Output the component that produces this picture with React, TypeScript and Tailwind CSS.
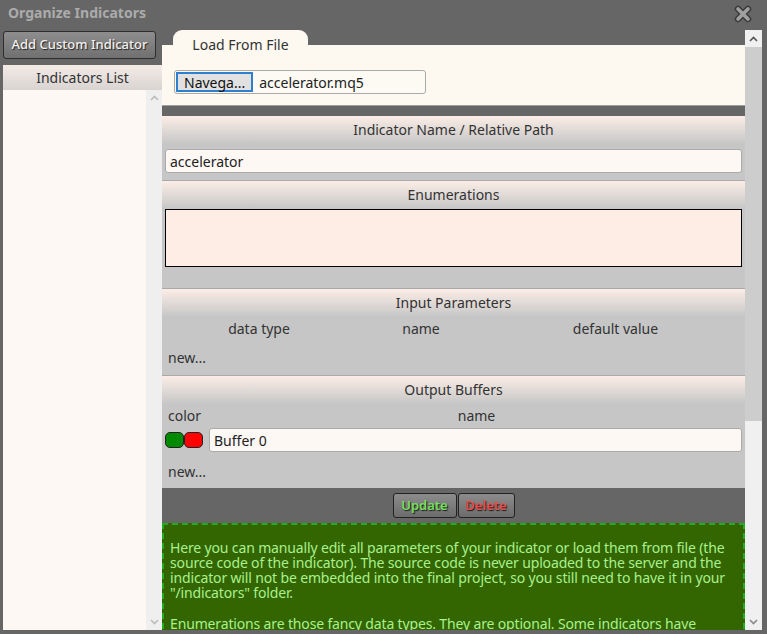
import React from "react";

const hdr =
  "h-[28px] flex items-center justify-center pb-[2px] text-[14px] text-[#333] bg-[linear-gradient(to_bottom,#fcede6_0%,#e3dcd8_45%,#c6c6c6_100%)]";

function Chevron({ up, color = "#555" }: { up?: boolean; color?: string }) {
  return (
    <svg width="9" height="6" viewBox="0 0 9 6">
      <path
        d={up ? "M1 5 L4.5 1.5 L8 5" : "M1 1 L4.5 4.5 L8 1"}
        fill="none"
        stroke={color}
        strokeWidth="1.6"
      />
    </svg>
  );
}

export default function App() {
  return (
    <div className="w-[767px] h-[634px] bg-[#666666] flex flex-col overflow-hidden font-['Noto_Sans',sans-serif]">
      {/* title bar */}
      <div className="h-[30px] flex justify-between items-start pl-[8px] pr-[15px] pt-[3px]">
        <span className="text-[14px] font-bold text-[#ababab] leading-[20px]">Organize Indicators</span>
        <svg width="18" height="18" viewBox="0 0 18 18" className="mt-[2px]">
          <path d="M4 4 L14 14 M14 4 L4 14" stroke="#3a3a3a" strokeWidth="6.5" strokeLinecap="round" />
          <path d="M4 4 L14 14 M14 4 L4 14" stroke="#a0a0a0" strokeWidth="3.6" strokeLinecap="round" />
        </svg>
      </div>

      {/* body */}
      <div className="flex flex-1 min-h-0 pl-[3px] pr-[5px] pb-[4px]">
        {/* left column */}
        <div className="w-[159px] flex flex-col">
          <button className="mt-[1px] h-[28px] w-[153px] rounded-[3px] border border-[#2e2e2e] bg-[linear-gradient(to_bottom,#8e8e8e,#707070)] text-[13px] font-medium text-[#f0f0f0] [text-shadow:1px_1px_1px_#222] font-['Noto_Sans',sans-serif]">
            Add Custom Indicator
          </button>
          <div className="mt-[6px] flex-1 flex flex-col min-h-0">
            <div className="h-[25px] flex items-center justify-center pb-[1px] text-[14px] text-[#333] bg-[linear-gradient(to_bottom,#f4ebe6,#d8d4d2)]">
              Indicators List
            </div>
            <div className="flex-1 flex min-h-0">
              <div className="flex-1 bg-[#fdf8f4]" />
              <div className="w-[16px] bg-[#efefef] flex flex-col justify-between items-center py-[5px]">
                <Chevron up color="#bbbbbb" />
                <Chevron color="#bbbbbb" />
              </div>
            </div>
          </div>
        </div>

        {/* right column */}
        <div className="w-[600px] flex">
          <div className="w-[583px] flex flex-col overflow-hidden">
            {/* tab */}
            <div className="h-[15px] pl-[11px]">
              <div className="relative z-10 w-[135px] h-[28px] rounded-t-[9px] bg-[#fdf9f0] flex items-center justify-center text-[14px] text-[#333]">
                Load From File
              </div>
            </div>
            {/* tab panel */}
            <div className="h-[60px] shrink-0 bg-[#fdf9f0] pt-[25px] pl-[12px]">
              <div className="w-[252px] h-[24px] border border-[#aaaaaa] rounded-[3px] bg-[#fdfaf4] flex items-center pl-[1px]">
                <div className="h-[20px] px-[6px] border-2 border-[#2f7fcf] bg-[#e1e1e1] flex items-center text-[14px] text-[#111]">
                  Navega...
                </div>
                <span className="ml-[6px] text-[14px] text-[#222]">accelerator.mq5</span>
              </div>
            </div>
            <div className="h-[1px] shrink-0 bg-[#a0a0a0]" />
            <div className="h-[10px] shrink-0 bg-[#666666]" />

            {/* Section 1 */}
            <div className="bg-[#c6c6c6] shrink-0">
              <div className={hdr}>Indicator Name / Relative Path</div>
              <div className="pt-[5px] pb-[7px] px-[3px]">
                <div className="h-[24px] bg-[#fdf8f4] border border-[#aaaaaa] rounded-[3px] flex items-center pl-[4px] text-[14px] text-[#222]">
                  accelerator
                </div>
              </div>
            </div>

            {/* Section 2 */}
            <div className="bg-[#c6c6c6] shrink-0 border-t border-[#aaaaaa]">
              <div className={hdr}>Enumerations</div>
              <div className="pb-[21px] px-[3px]">
                <div className="h-[58px] bg-[#fdede5] border border-black" />
              </div>
            </div>

            {/* Section 3 */}
            <div className="bg-[#c6c6c6] shrink-0 border-t border-[#aaaaaa]">
              <div className={hdr}>Input Parameters</div>
              <div className="h-[22px] flex items-center text-[14px] text-[#333]">
                <div className="w-[194px] text-center">data type</div>
                <div className="w-[130px] text-center">name</div>
                <div className="w-[259px] text-center">default value</div>
              </div>
              <div className="h-[36px] flex items-center pl-[6px] text-[14px] text-[#333]">new...</div>
            </div>

            {/* Section 4 */}
            <div className="bg-[#c6c6c6] shrink-0 border-t border-[#aaaaaa]">
              <div className={hdr}>Output Buffers</div>
              <div className="h-[22px] flex items-center text-[14px] text-[#333]">
                <div className="w-[46px] pl-[6px]">color</div>
                <div className="flex-1 text-center">name</div>
              </div>
              <div className="h-[28px] flex items-start pt-[2px] px-[3px] gap-[6px]">
                <div className="flex mt-[4px]">
                  <div className="w-[19px] h-[16px] rounded-[5px] border border-[#222] bg-[#008a00]" />
                  <div className="w-[19px] h-[16px] rounded-[5px] border border-[#222] bg-[#ff0000]" />
                </div>
                <div className="flex-1 h-[24px] bg-[#fdf8f4] border border-[#aaaaaa] rounded-[3px] flex items-center pl-[4px] text-[14px] text-[#222]">
                  Buffer 0
                </div>
              </div>
              <div className="h-[34px] flex items-center pl-[6px] text-[14px] text-[#333]">new...</div>
            </div>

            {/* buttons band */}
            <div className="h-[35px] shrink-0 bg-[#666666] flex items-center justify-center">
              <button className="h-[25px] w-[64px] rounded-[3px] border border-[#222] bg-[linear-gradient(to_bottom,#8c8c8c,#6c6c6c)] text-[13px] font-semibold text-[#72e05e] [text-shadow:1px_1px_1px_#1a1a1a]">
                Update
              </button>
              <button className="h-[25px] w-[57px] ml-[1px] rounded-[3px] border border-[#222] bg-[linear-gradient(to_bottom,#8c8c8c,#6c6c6c)] text-[13px] font-semibold text-[#e85050] [text-shadow:1px_1px_1px_#1a1a1a]">
                Delete
              </button>
            </div>

            {/* green help */}
            <div className="shrink-0 bg-[#336600] border-2 border-dashed border-[#1fae1f] pt-[15px] pl-[6px] pr-[4px] text-[14px] leading-[15px] tracking-[-0.15px] text-[#a9f08e]">
              <p className="mb-[16px]">
                Here you can manually edit all parameters of your indicator or load them from file (the
                source code of the indicator). The source code is never uploaded to the server and the
                indicator will not be embedded into the final project, so you still need to have it in your
                "/indicators" folder.
              </p>
              <p className="mb-[16px]">
                Enumerations are those fancy data types. They are optional. Some indicators have
                enumerations in their input parameters, and you need to add them here so they can be
                selected when the indicator is used.
              </p>
            </div>
          </div>

          {/* right scrollbar */}
          <div className="w-[17px] bg-[#f0f0f0] flex flex-col">
            <div className="h-[17px] flex items-center justify-center">
              <Chevron up />
            </div>
            <div className="h-[374px] bg-[#cdcdcd]" />
            <div className="flex-1" />
            <div className="h-[17px] flex items-center justify-center">
              <Chevron color="#888" />
            </div>
          </div>
        </div>
      </div>
    </div>
  );
}
